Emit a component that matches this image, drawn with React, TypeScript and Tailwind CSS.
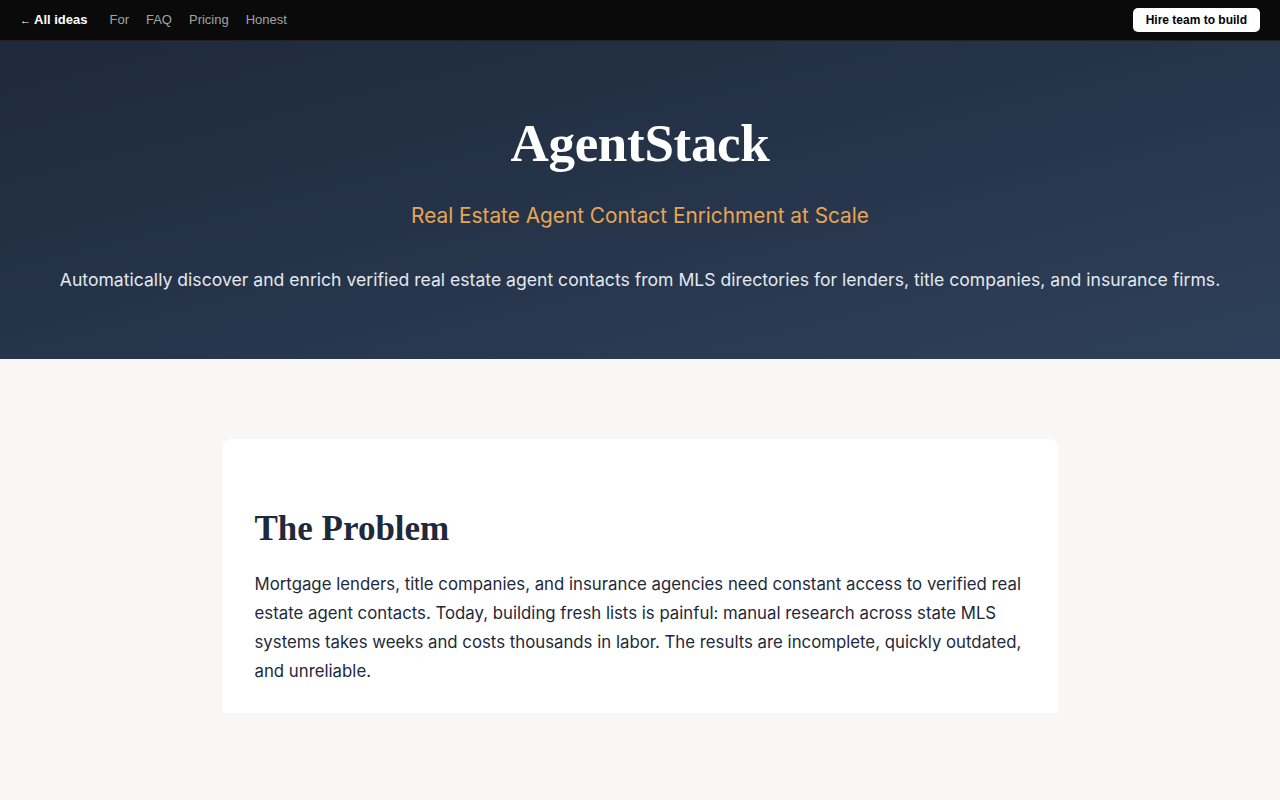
import React from "react";

const navLinks = ["For", "FAQ", "Pricing", "Honest"];

function Nav() {
  return (
    <nav className="h-[41px] bg-[#0a0a0a] border-b border-[#222] flex items-center justify-between pl-5 pr-5 font-['Liberation_Sans',Arial,sans-serif] text-[13px]">
      <div className="flex items-center gap-[17px]">
        <a className="text-white font-bold mr-[5px]" href="#">
          <span className="font-normal text-[11px] mr-[3px]">←</span>All ideas
        </a>
        {navLinks.map((l) => (
          <a key={l} className="text-[#a3a3a3]" href="#">
            {l}
          </a>
        ))}
      </div>
      <button className="bg-white text-black font-bold text-[12px] rounded-[5px] px-[13px] h-[24px]">
        Hire team to build
      </button>
    </nav>
  );
}

function Hero() {
  return (
    <header className="h-[318px] bg-linear-to-br from-[#1e293b] to-[#2e4059] flex flex-col items-center text-center font-['Inter',sans-serif]">
      <h1 className="mt-[72px] text-white font-bold text-[53px] leading-[60px] tracking-[-0.3px] font-['Liberation_Serif','DejaVu_Serif',serif]">
        AgentStack
      </h1>
      <p className="mt-[28px] text-[#e8a554] text-[20.8px] leading-[30px]">
        Real Estate Agent Contact Enrichment at Scale
      </p>
      <p className="mt-[35px] text-[#e2e8f0] text-[17.6px] leading-[28px]">
        Automatically discover and enrich verified real estate agent contacts from MLS directories for lenders, title
        companies, and insurance firms.
      </p>
    </header>
  );
}

export default function App() {
  return (
    <div className="min-h-[800px] bg-[#f8f7f5]">
      <Nav />
      <Hero />
      <main className="pt-[80px] flex justify-center font-['Inter',sans-serif]">
        <section className="w-[835px] h-[274px] bg-white rounded-t-[8px] px-8 pt-[68px]">
          <h2 className="text-[#1e293b] font-bold text-[35px] leading-[44px] font-['Liberation_Serif','DejaVu_Serif',serif]">
            The Problem
          </h2>
          <p className="mt-[19px] text-[#1e293b] text-[16.8px] leading-[29px]">
            Mortgage lenders, title companies, and insurance agencies need constant access to verified real estate
            agent contacts. Today, building fresh lists is painful: manual research across state MLS systems takes
            weeks and costs thousands in labor. The results are incomplete, quickly outdated, and unreliable.
          </p>
        </section>
      </main>
    </div>
  );
}
